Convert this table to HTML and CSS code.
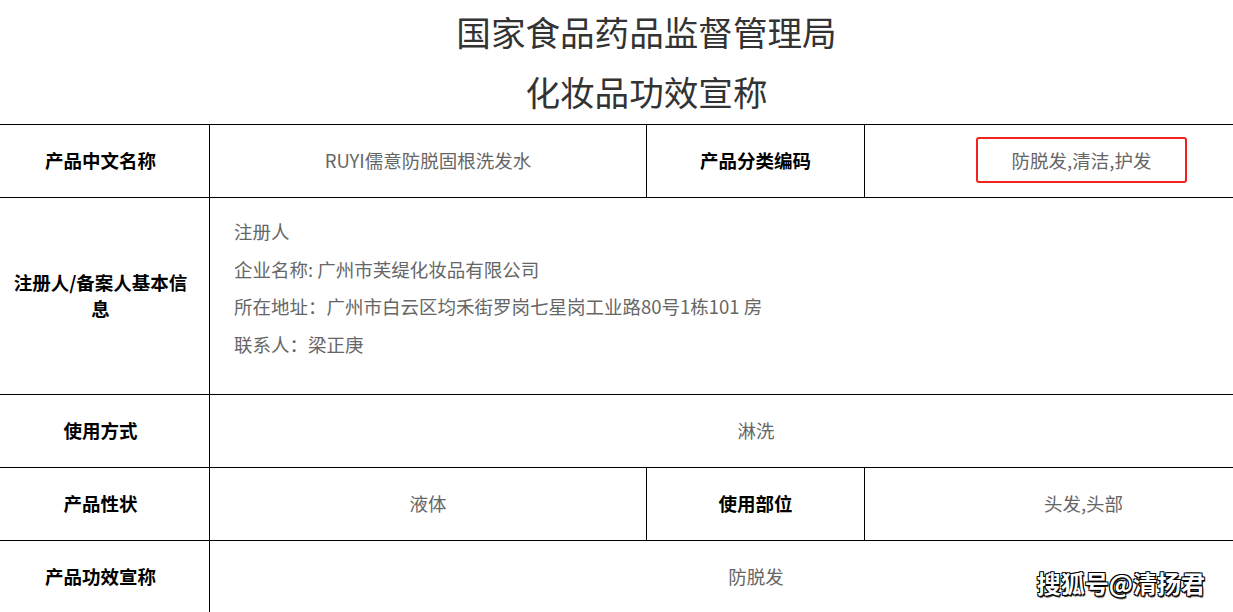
FILE: index.html
```html
<!DOCTYPE html>
<html lang="zh-CN">
<head>
    <meta charset="UTF-8">
    <title>化妆品功效宣称</title>
    <link rel="stylesheet" href="styles.css">
</head>
<body>
    <div class="page">
        <h1 class="title">国家食品药品监督管理局<br>化妆品功效宣称</h1>

        <table class="info-table">
            <colgroup>
                <col class="c1">
                <col class="c2">
                <col class="c3">
                <col class="c4">
            </colgroup>
            <tr class="row-short">
                <th>产品中文名称</th>
                <td>RUYI儒意防脱固根洗发水</td>
                <th>产品分类编码</th>
                <td><span class="mark">防脱发,清洁,护发</span></td>
            </tr>
            <tr class="row-tall">
                <th>注册人/备案人基本信息</th>
                <td colspan="3" class="registrant">
                    <p>注册人</p>
                    <p>企业名称: 广州市芙缇化妆品有限公司</p>
                    <p>所在地址：广州市白云区均禾街罗岗七星岗工业路80号1栋101 房</p>
                    <p>联系人：梁正庚</p>
                </td>
            </tr>
            <tr class="row-short">
                <th>使用方式</th>
                <td colspan="3">淋洗</td>
            </tr>
            <tr class="row-short">
                <th>产品性状</th>
                <td>液体</td>
                <th>使用部位</th>
                <td>头发,头部</td>
            </tr>
            <tr class="row-short">
                <th>产品功效宣称</th>
                <td colspan="3">防脱发</td>
            </tr>
        </table>
    </div>

    <div class="watermark">搜狐号@清扬君</div>
</body>
</html>
```

FILE: styles.css
```css
html, body {
    overflow: hidden;
}

body {
    margin: 0;
    background-color: #ffffff;
    font-family: "Microsoft YaHei", "Noto Sans CJK SC", sans-serif;
}

.page {
    width: 1311px;
    margin-left: -9px;
}

.title {
    margin: 0;
    padding-top: 1px;
    height: 123px;
    font-size: 34.6px;
    font-weight: normal;
    line-height: 60px;
    color: #333;
    text-align: center;
}

.info-table {
    width: 1311px;
    border-collapse: collapse;
    table-layout: fixed;
    font-size: 18.5px;
}

.c1 { width: 218px; }
.c2 { width: 437px; }
.c3 { width: 218px; }
.c4 { width: 438px; }

.info-table th,
.info-table td {
    border: 1px solid #000;
    text-align: center;
    vertical-align: middle;
    padding: 0 21px 3px;
}

.info-table th {
    color: #000;
    font-weight: bold;
    line-height: 26px;
}

.info-table td {
    color: #666;
}

.row-short {
    height: 73px;
}

.row-tall {
    height: 197px;
}

.registrant {
    text-align: left !important;
    vertical-align: top !important;
    padding: 15px 24px 0 !important;
}

.registrant p {
    margin: 0;
    line-height: 37.6px;
}

.mark {
    display: inline-block;
    margin-right: 4px;
    padding: 11px 34px;
    border: 2px solid #f2231c;
    border-radius: 3px;
    line-height: 20px;
}

.watermark {
    position: absolute;
    right: 28px;
    bottom: 12px;
    font-size: 24px;
    font-weight: bold;
    color: #fff;
    text-shadow: -1px -1px 0 #000, 1px -1px 0 #000, -1px 1px 0 #000, 1px 1px 0 #000, 1px 2px 1px #333;
}
```
